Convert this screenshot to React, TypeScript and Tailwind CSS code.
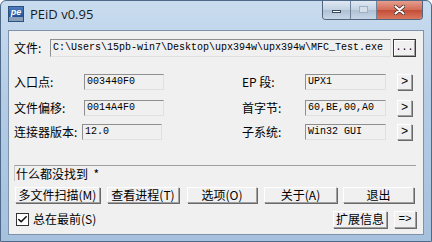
import { Check } from "lucide-react";

const cjk = "font-['SimSun','Noto_Sans_CJK_SC',sans-serif] text-[12px] leading-[14px] text-black";
const mono = "font-['Liberation_Mono',monospace] text-[10px] leading-[14px] text-black";
const field = "h-[16px] bg-[#f0f0f0] border border-[#8f8f8f] border-r-[#e0e0e0] border-b-[#e0e0e0] flex items-center pl-[2px]";
const btn = "flex items-center justify-center bg-[#f0f0f0] border border-white border-r-[#a0a0a0] border-b-[#a0a0a0] shadow-[1px_1px_0_#696969]";

function InfoRow({ label, value, fieldLeft }: { label: string; value: string; fieldLeft: number }) {
  return (
    <div className="flex items-center h-[16px]">
      <span className={`${cjk} w-[70px] shrink-0`}>{label}</span>
      <div className={`${field} w-[80px] ${fieldLeft === 68 ? "-ml-[2px]" : ""}`}>
        <span className={mono}>{value}</span>
      </div>
    </div>
  );
}

function RightRow({ label, value }: { label: string; value: string }) {
  return (
    <div className="flex items-center h-[16px]">
      <span className={`${cjk} w-[63px] shrink-0`}>{label}</span>
      <div className={`${field} w-[81px]`}>
        <span className={mono}>{value}</span>
      </div>
      <div className={`${btn} ml-[11px] w-[15px] h-[16px]`}>
        <span className={`${mono} text-[12px]`}>&gt;</span>
      </div>
    </div>
  );
}

export default function App() {
  return (
    <div className="w-[432px] h-[242px] overflow-hidden flex flex-col rounded-t-[6px] border border-[#4f6a88] bg-[linear-gradient(180deg,#c9dcef_0%,#b4cce6_40%,#a6c1de_100%)]">
      {/* title bar */}
      <div className="h-[29px] flex items-start shrink-0">
        <div className="flex items-center mt-[5px] ml-[7px]">
          <div className="w-[16px] h-[16px] flex flex-col overflow-hidden border border-[#2c4f7c]">
            <div className="h-[10px] bg-[linear-gradient(180deg,#4d7cc0,#1f4f94)] flex items-center justify-center">
              <span className="font-['Liberation_Sans',sans-serif] italic font-bold text-[9px] leading-[9px] text-white">pe</span>
            </div>
            <div className="flex-1 bg-[#8aa0b8]" />
          </div>
          <span className="ml-[6px] font-['Open_Sans',sans-serif] text-[13px] leading-[16px] text-[#1a1a1a]">PEiD v0.95</span>
        </div>
        <div className="ml-auto mr-[8px] flex h-[20px] -mt-[1px] rounded-b-[4px] overflow-hidden border border-[#51657d] border-t-0">
          <div className="w-[28px] flex items-center justify-center bg-[linear-gradient(180deg,#e3ebf4,#c3d2e3_50%,#aebfd3_51%,#c7d6e7)] border-r border-[#6c819a]">
            <div className="w-[9px] h-[3px] bg-white border border-[#3a4b61] mt-[4px]" />
          </div>
          <div className="w-[26px] flex items-center justify-center bg-[linear-gradient(180deg,#e3ebf4,#c3d2e3_50%,#aebfd3_51%,#c7d6e7)] border-r border-[#6c819a]">
            <div className="w-[9px] h-[7px] border border-[#9fb0c4] bg-[#d4dfeb]" />
          </div>
          <div className="w-[45px] flex items-center justify-center bg-[linear-gradient(180deg,#e8a393,#d36e5a_50%,#c44a34_51%,#d9785f)]">
            <svg width="11" height="10" viewBox="0 0 11 10">
              <path d="M1.5 1.5 L9.5 8.5 M9.5 1.5 L1.5 8.5" stroke="#3a1e18" strokeWidth="3.6" strokeLinecap="round" />
              <path d="M1.5 1.5 L9.5 8.5 M9.5 1.5 L1.5 8.5" stroke="#ffffff" strokeWidth="2.2" strokeLinecap="round" />
            </svg>
          </div>
        </div>
      </div>

      {/* client area */}
      <div className="mx-[7px] h-[205px] bg-[#f0f0f0] border border-[#7d93ab] flex flex-col pl-[5px] pr-[7px]">
        <div className="flex items-center mt-[8px] h-[18px]">
          <span className={`${cjk} w-[36px] shrink-0`}>文件:</span>
          <div className={`${field} h-[18px] w-[341px]`}>
            <span className={mono}>C:\Users\15pb-win7\Desktop\upx394w\upx394w\MFC_Test.exe</span>
          </div>
          <div className="ml-auto w-[23px] h-[18px] border border-[#3c3c3c] flex">
            <div className={`${btn} flex-1 shadow-none`}>
              <span className={`${mono} leading-[10px]`}>...</span>
            </div>
          </div>
        </div>

        <div className="flex mt-[17px]">
          <div className="flex flex-col gap-[10px] w-[228px]">
            <InfoRow label="入口点:" value="003440F0" fieldLeft={70} />
            <InfoRow label="文件偏移:" value="0014A4F0" fieldLeft={70} />
            <div className="-mt-[2px]">
              <InfoRow label="连接器版本:" value="12.0" fieldLeft={68} />
            </div>
          </div>
          <div className="flex flex-col gap-[10px]">
            <RightRow label="EP 段:" value="UPX1" />
            <RightRow label="首字节:" value="60,BE,00,A0" />
            <div className="-mt-[2px]">
              <RightRow label="子系统:" value="Win32 GUI" />
            </div>
          </div>
        </div>

        <div className="mt-[25px] h-[16px] border-t border-[#a0a0a0] border-l border-l-[#c8c8c8] flex items-center pl-[1px]">
          <span className={cjk}>什么都没找到&nbsp;&nbsp;*</span>
        </div>

        <div className="flex mt-[6px] h-[16px] items-stretch">
          <div className={`${btn} w-[85px] ml-[1px]`}><span className={cjk}>多文件扫描(M)</span></div>
          <div className={`${btn} w-[72px] ml-[7px]`}><span className={cjk}>查看进程(T)</span></div>
          <div className={`${btn} w-[70px] ml-[8px]`}><span className={cjk}>选项(O)</span></div>
          <div className={`${btn} w-[73px] ml-[7px]`}><span className={cjk}>关于(A)</span></div>
          <div className={`${btn} w-[71px] ml-[6px]`}><span className={cjk}>退出</span></div>
        </div>

        <div className="flex items-center mt-[7px] h-[18px]">
          <div className="w-[13px] h-[13px] ml-[2px] bg-white border border-[#333] flex items-center justify-center">
            <Check size={11} strokeWidth={3.5} color="#111" />
          </div>
          <span className={`${cjk} ml-[4px]`}>总在最前(S)</span>
          <div className={`${btn} ml-auto w-[54px] h-[17px]`}><span className={cjk}>扩展信息</span></div>
          <div className={`${btn} ml-[7px] w-[22px] h-[17px]`}><span className={`${mono} text-[11px]`}>=&gt;</span></div>
        </div>
      </div>
    </div>
  );
}
